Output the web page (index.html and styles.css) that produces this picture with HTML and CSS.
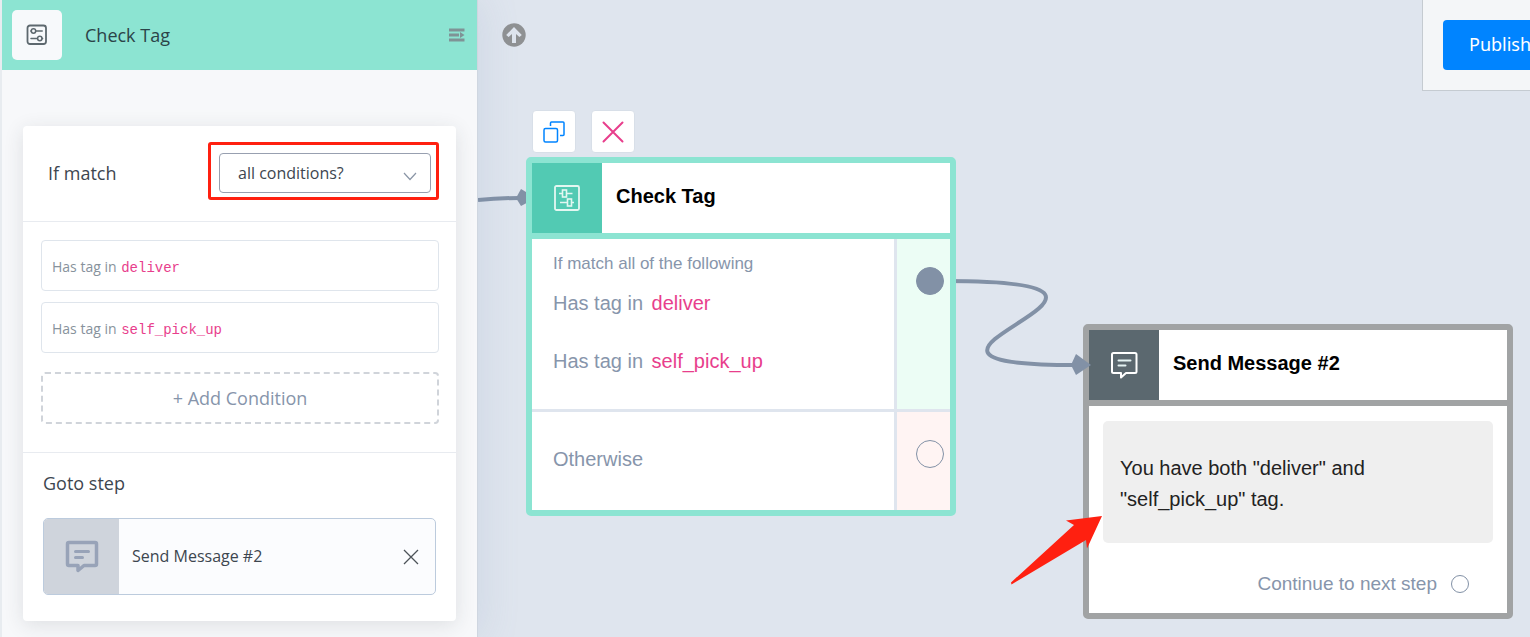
FILE: index.html
```html
<!DOCTYPE html>
<html lang="en">
<head>
<meta charset="utf-8">
<title>Flow builder</title>
<meta name="viewport" content="width=device-width, initial-scale=1">
<link rel="stylesheet" href="styles.css">
</head>
<body>
<div class="app">
  <aside class="sidebar">
    <header class="sidebar-header">
      <span class="header-icon">
        <svg width="22" height="22" viewBox="0 0 22 22" fill="none" stroke="#5d686e" stroke-width="1.5" stroke-linecap="round">
          <rect x="1.5" y="1.5" width="18.500" height="18.500" rx="2.500" stroke-width="1.800"/>
          <circle cx="7.500" cy="7" r="2.200"/><path d="M4.800 7h.3M10 7h6.200"/>
          <circle cx="13.800" cy="14.500" r="2.200"/><path d="M5 14.500h6.300M16.200 14.500h.4"/>
        </svg>
      </span>
      <h1 class="sidebar-title">Check Tag</h1>
      <button class="collapse" type="button" aria-label="Collapse panel">
        <svg width="16" height="14" viewBox="0 0 16 14" fill="#7f9396"><path d="M0 .5h15.500v3H0zM0 5.500h10v3H0zM11 4l4.500 3-4.500 3zM0 10.500h15.500v3H0z"/></svg>
      </button>
    </header>
    <section class="card">
      <div class="match-row">
        <label for="match">If match</label>
        <div class="select-wrap">
          <select id="match"><option>all conditions?</option><option>any condition?</option></select>
          <svg class="chevron" width="14" height="9" viewBox="0 0 14 9" fill="none" stroke="#8a95a6" stroke-width="1.200"><path d="M1 1l6 6.500L13 1"/></svg>
          <span class="highlight"></span>
        </div>
      </div>
      <div class="conditions">
        <div class="condition">Has tag in <code>deliver</code></div>
        <div class="condition">Has tag in <code>self_pick_up</code></div>
        <button class="add" type="button">+ Add Condition</button>
      </div>
      <div class="goto">
        <h2 class="goto-title">Goto step</h2>
        <div class="step">
          <span class="step-icon">
            <svg width="34" height="34" viewBox="0 0 34 34" fill="none" stroke="#98a3b8" stroke-width="3" stroke-linecap="round"><path stroke-width="3.500" stroke-linejoin="round" d="M4 2.500h26q1.500 0 1.500 1.500v20q0 1.500-1.500 1.500H19l-6 5v-5H4Q2.500 25.500 2.500 24V4Q2.500 2.500 4 2.500z"/><path d="M10.500 11.500h13M10.500 17.500h7"/></svg>
          </span>
          <span class="step-name">Send Message #2</span>
          <button class="step-remove" type="button" aria-label="Remove step">
            <svg width="16" height="16" viewBox="0 0 16 16" stroke="#4c5359" stroke-width="1.300"><path d="M1 1l14 14M15 1L1 15"/></svg>
          </button>
        </div>
      </div>
    </section>
  </aside>

  <main class="canvas">
    <button class="scroll-up" type="button" aria-label="Back to top">
      <svg width="24" height="24" viewBox="0 0 24 24"><circle cx="12" cy="12" r="11.700" fill="#8f9193"/><path fill="#dfe5ee" d="M12 4l7.800 8-2.400 2.100L14 11v9h-4v-9l-3.400 3.100L4.200 12z"/></svg>
    </button>

    <article class="node node-message">
      <header class="node-header">
        <span class="node-icon">
          <svg width="28" height="28" viewBox="0 0 28 28" fill="none" stroke="#fff" stroke-width="2" stroke-linecap="round" stroke-linejoin="round"><path d="M3.500 2h21.500q1.500 0 1.500 1.500v17Q26.500 22 25 22H16L11 26.500V22H3.500q-1.500 0-1.500-1.500v-17Q2 2 3.500 2z"/><path stroke="#e4f2f2" d="M8.500 9.500h12M8.500 14.500h7"/></svg>
        </span>
        <h2 class="node-title">Send Message #2</h2>
      </header>
      <div class="message-body">
        <p class="bubble">You have both "deliver" and<br>"self_pick_up" tag.</p>
        <div class="next"><span>Continue to next step</span><span class="port port-small"></span></div>
      </div>
    </article>

    <svg class="edges" width="100%" height="100%" fill="none" stroke="#8291a6" stroke-width="4">
      <path d="M0 200Q20 198 42 198"/><path fill="#8291a6" stroke="none" d="M38 198l5-9 15 9-15 8z"/>
      <path d="M467 281C739 281 347 365 597 365"/><path fill="#8291a6" stroke="none" d="M593 365l5-11 15 11-15 10z"/>
    </svg>

    <div class="node-tools">
      <button class="tool" type="button" aria-label="Duplicate">
        <svg width="22" height="22" viewBox="0 0 22 22" fill="none" stroke="#0084ff" stroke-width="1.500"><rect x="1" y="7.500" width="13.500" height="13.500" rx="1.500"/><path d="M7.500 5V2q0-1 1-1h11.500q1 0 1 1v11.500q0 1-1 1h-3"/></svg>
      </button>
      <button class="tool" type="button" aria-label="Delete">
        <svg width="22" height="22" viewBox="0 0 22 22" stroke="#e83e8c" stroke-width="2" stroke-linecap="round"><path d="M1.500 1.500l19 19M20.500 1.500l-19 19"/></svg>
      </button>
    </div>

    <article class="node node-check">
      <header class="node-header">
        <span class="node-icon">
          <svg width="26" height="26" viewBox="0 0 26 26" fill="none" stroke="#e3f7f1" stroke-width="1.600"><rect x="1" y="1" width="24" height="24" rx="1.500" stroke-width="1.800"/><rect x="8.500" y="5" width="4" height="7"/><path d="M5 8.500h3.500M12.500 8.500H18.500"/><rect x="13.500" y="14" width="4" height="7"/><path d="M6 17.500h7.500M17.500 17.500H20"/></svg>
        </span>
        <h2 class="node-title">Check Tag</h2>
      </header>
      <div class="branches">
        <div class="branch">
          <p class="branch-label">If match all of the following</p>
          <p class="rule">Has tag in <span class="tag">deliver</span></p>
          <p class="rule">Has tag in <span class="tag">self_pick_up</span></p>
        </div>
        <div class="outlet outlet-yes"><span class="port port-filled"></span></div>
        <div class="branch branch-else"><p>Otherwise</p></div>
        <div class="outlet outlet-no"><span class="port"></span></div>
      </div>
    </article>

    <svg class="pointer" width="93" height="70" viewBox="0 0 93 70" fill="#ff2010"><path d="M92 1L56 5.500 64 10 1 67.500 1.500 69.500 76 25l1 8.500z"/></svg>

    <div class="publish-bar"><button class="publish" type="button">Publish</button></div>
  </main>
</div>
</body>
</html>
```
FILE: styles.css
```css
* { box-sizing: border-box; }
body, h1, h2, p { margin: 0; }
body { background: #dfe5ee; font-family: "Noto Sans", "Open Sans", sans-serif; font-size: 16px; color: #3d464f; }
button { font: inherit; border: 0; padding: 0; background: none; cursor: pointer; }
svg { display: block; }
.app { display: flex; min-height: 100vh; overflow: hidden; }

.sidebar {
  flex: 0 0 478px; position: relative; z-index: 2; background: #f7f8fa;
  border-left: 2px solid #e8ecf0; border-right: 1px solid #cfd6e0;
  box-shadow: 4px 0 36px rgba(120, 145, 180, .16);
}
.sidebar-header { display: flex; align-items: center; height: 70px; padding: 0 12px 0 10px; background: #8ce4d2; }
.header-icon { display: grid; place-items: center; width: 50px; height: 50px; border-radius: 5px; background: #f7f9fb; }
.sidebar-title { flex: 1; padding-left: 23px; font-family: "Open Sans", sans-serif; font-size: 18px; font-weight: 400; line-height: 24px; color: #2b4348; }

.card { margin: 56px 21px 16px; border-radius: 4px; background: #fff; box-shadow: 0 4px 20px rgba(40, 50, 60, .12); font-family: "Open Sans", sans-serif; }
.match-row { display: flex; align-items: center; justify-content: space-between; height: 96px; padding: 0 25px 2px; border-bottom: 1px solid #e8ebf0; font-size: 18px; }
.select-wrap { position: relative; width: 212px; }
.select-wrap select {
  display: block; width: 100%; height: 40px; padding: 0 36px 0 18px; appearance: none;
  border: 1px solid #98a0b0; border-radius: 4px; background: #fff; font: inherit; font-size: 16px; color: #3d464f;
}
.chevron { position: absolute; right: 14px; top: 19px; pointer-events: none; }
.highlight { position: absolute; inset: -11px -8px -7px -11px; border: 3px solid #ff2010; border-radius: 3px; pointer-events: none; }

.conditions { display: flex; flex-direction: column; gap: 11px; padding: 18px 17px 28px 18px; border-bottom: 1px solid #e8ebf0; }
.condition { height: 51px; padding: 0 10px; line-height: 51px; border: 1px solid #dfe5ec; border-radius: 4px; font-size: 14px; color: #87929c; }
.condition code { margin-left: 1px; font-family: "Liberation Mono", monospace; font-size: 14px; color: #e83e8c; }
.add { height: 52px; margin-top: 8px; border: 2px dashed #d0d4da; border-radius: 4px; font-size: 18px; color: #8795ab; }

.goto { padding: 18px 20px 26px; }
.goto-title { margin-bottom: 23px; font-size: 18px; font-weight: 400; line-height: 24px; }
.step { display: flex; align-items: center; height: 77px; overflow: hidden; border: 1px solid #bccbdd; border-radius: 5px; background: #fbfcfe; }
.step-icon { display: grid; place-items: center; width: 75px; height: 75px; background: #cfd4dc; }
.step-name { flex: 1; padding: 0 0 2px 13px; }
.step-remove { padding: 8px; margin-right: 8px; }

.canvas { flex: 1; position: relative; min-width: 0; overflow: hidden; font-family: "Liberation Sans", Arial, sans-serif; font-size: 20px; color: #8795ab; }
.scroll-up { position: absolute; left: 24px; top: 23px; }
.edges { position: absolute; inset: 0; pointer-events: none; }

.node { position: absolute; width: 430px; border: 6px solid; border-radius: 5px; background: #fff; }
.node-header { display: flex; align-items: center; height: 76px; border-bottom: 6px solid; border-color: inherit; }
.node-icon { display: grid; place-items: center; width: 70px; height: 70px; }
.node-title { padding: 0 14px 4px; font-size: 20px; font-weight: 700; line-height: 24px; color: #000; }
.node-check { left: 48px; top: 157px; border-color: #8ce4d2; }
.node-check .node-icon { background: #52cab3; }
.node-message { left: 605px; top: 324px; border-color: #a1a3a4; }
.node-message .node-icon { background: #5b686f; }

.branches { display: grid; grid-template-columns: 1fr 56px; }
.branch { padding: 13px 21px 19px; }
.branch-label { font-size: 17px; line-height: 24px; margin-bottom: 12px; }
.rule { line-height: 30px; }
.rule + .rule { margin-top: 28px; padding-bottom: 14px; }
.tag { color: #e83e8c; margin-left: 3px; }
.branch-else { padding: 35px 21px 38px; border-top: 3px solid #dfe5ee; line-height: 25px; }
.outlet { display: flex; justify-content: flex-end; padding: 28px 6px 0 0; border-left: 3px solid #dfe5ee; background: #ecfdf5; }
.outlet-no { border-top: 3px solid #dfe5ee; background: #fff4f3; }
.port { width: 28px; height: 28px; border: 1px solid #8291a6; border-radius: 50%; }
.port-filled { background: #8291a6; }
.port-small { width: 18px; height: 18px; }

.message-body { padding: 15px 14px 17px; }
.bubble { padding: 32px 17px 28px; border-radius: 5px; background: #efefef; color: #222; line-height: 31px; }
.next { display: flex; align-items: center; justify-content: flex-end; gap: 14px; margin-top: 29px; padding-right: 24px; font-size: 19px; line-height: 24px; }

.node-tools { position: absolute; left: 54px; top: 110px; display: flex; gap: 15px; }
.tool { display: grid; place-items: center; width: 44px; height: 43px; border: 1px solid #d8dfe8; border-radius: 4px; background: #fff; }
.pointer { position: absolute; left: 532px; top: 515px; pointer-events: none; }

.publish-bar { position: absolute; left: 944px; top: 0; padding: 20px; height: 91px; border: solid #c5cbd1; border-width: 0 0 1px 1px; background: #f4f6f8; }
.publish { height: 50px; padding: 0 26px 2px; border-radius: 4px; background: #0084ff; color: #fff; font-family: "Noto Sans", sans-serif; font-size: 18px; }
```
